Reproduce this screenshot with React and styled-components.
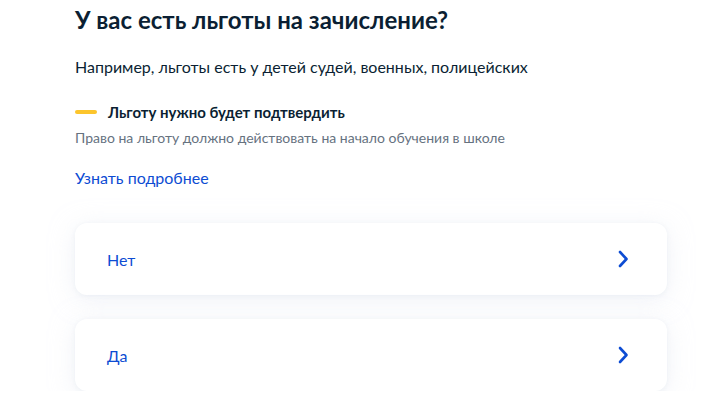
import React from 'react';
import styled, { createGlobalStyle } from 'styled-components';

const Global = createGlobalStyle`
  body {
    margin: 0;
    background: #ffffff;
    font-family: Lato, "Noto Sans", sans-serif;
    color: #0b1f33;
  }
`;

const Page = styled.div`
  padding: 4px 45px 0 75px;
  width: 592px;
`;

const Title = styled.h1`
  margin: 0;
  font-size: 24px;
  line-height: 32px;
  font-weight: 700;
  color: #0b1f33;
`;

const Lead = styled.p`
  margin: 19px 0 0;
  font-size: 16px;
  line-height: 24px;
`;

const Notice = styled.div`
  margin-top: 23px;
  display: flex;
  align-items: center;
  gap: 11px;
  font-size: 15px;
  line-height: 20px;
  font-weight: 700;
`;

const Bar = styled.span`
  width: 22px;
  height: 4px;
  border-radius: 2px;
  background: #fcc52c;
`;

const Hint = styled.p`
  margin: 6px 0 0;
  font-size: 14px;
  line-height: 20px;
  color: #66727f;
`;

const More = styled.a`
  display: block;
  margin-top: 18px;
  font-size: 16px;
  line-height: 24px;
  color: #0d4cd3;
  text-decoration: none;
`;

const Options = styled.div`
  margin-top: 33px;
  display: flex;
  flex-direction: column;
  gap: 24px;
`;

const Card = styled.button`
  display: flex;
  align-items: center;
  justify-content: space-between;
  height: 72px;
  padding: 0 38px 0 32px;
  border: none;
  border-radius: 12px;
  background: #ffffff;
  box-shadow: 0 1px 4px rgba(232, 236, 242, 0.6), 0 4px 24px rgba(225, 230, 240, 0.55);
  font-family: Lato, "Noto Sans", sans-serif;
  font-size: 16px;
  color: #0d4cd3;
  cursor: pointer;
  text-align: left;
`;

const Chevron = () => (
  <svg width="11" height="18" viewBox="0 0 11 18" fill="none">
    <path d="M2 2l6.5 7L2 16" stroke="#0d4cd3" strokeWidth="2.6" strokeLinecap="round" strokeLinejoin="round" />
  </svg>
);

export default function App() {
  return (
    <>
      <Global />
      <Page>
        <Title>У вас есть льготы на зачисление?</Title>
        <Lead>Например, льготы есть у детей судей, военных, полицейских</Lead>
        <Notice>
          <Bar />
          Льготу нужно будет подтвердить
        </Notice>
        <Hint>Право на льготу должно действовать на начало обучения в школе</Hint>
        <More href="#">Узнать подробнее</More>
        <Options>
          {['Нет', 'Да'].map((o) => (
            <Card key={o}>
              {o}
              <Chevron />
            </Card>
          ))}
        </Options>
      </Page>
    </>
  );
}
